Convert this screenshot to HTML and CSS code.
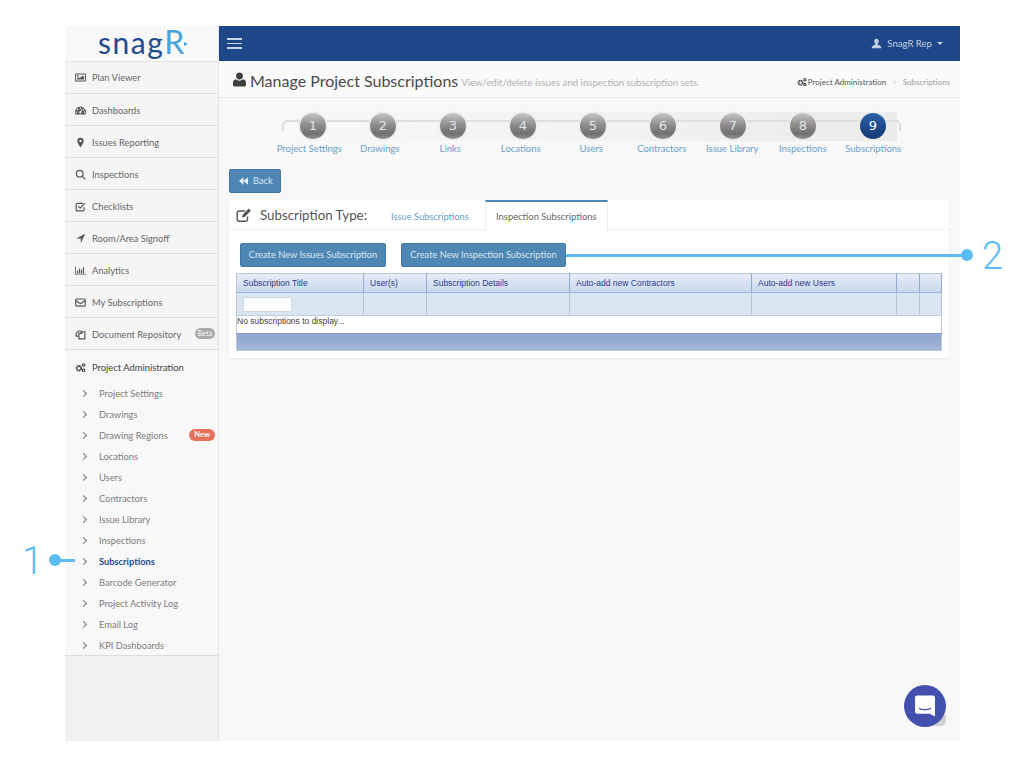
FILE: index.html
```html
<!DOCTYPE html>
<html lang="en">
<head>
    <meta charset="UTF-8">
    <meta name="viewport" content="width=device-width, initial-scale=1.0">
    <title>Manage Project Subscriptions</title>
    <link rel="stylesheet" href="styles.css">
</head>
<body>
    <div class="app">
        <aside class="sidebar">
            <div class="logo"><span class="logo-snag">snag</span><span class="logo-r">R</span><span class="logo-tip"></span></div>
            <ul class="nav">
                <li class="nav-item">
                    <svg class="ico" viewBox="0 0 14 14"><path fill-rule="evenodd" d="M1 2h12a1 1 0 0 1 1 1v8a1 1 0 0 1-1 1H1a1 1 0 0 1-1-1V3a1 1 0 0 1 1-1zm.2 1.2v7.6h11.6V3.2zM2.4 9.7V8.5l2.2-2.2 1.5 1.5 3.4-3.4 2.1 2.1v3.2zM2.4 5a1.1 1.1 0 1 1 2.2 0 1.1 1.1 0 0 1-2.2 0z"/></svg>
                    Plan Viewer
                </li>
                <li class="nav-item">
                    <svg class="ico" viewBox="0 0 14 14"><path fill-rule="evenodd" d="M7 2a7 7 0 0 1 7 7c0 1.2-.3 2.2-.8 3H.8C.3 11.200 0 10.200 0 9a7 7 0 0 1 7-7zM7 3.300a1 1 0 1 0 0 2 1 1 0 0 0 0-2zM3.400 4.900a1 1 0 1 0 0 2 1 1 0 0 0 0-2zM10.600 4.900a1 1 0 1 0 0 2 1 1 0 0 0 0-2zM2 8.300a1 1 0 1 0 0 2 1 1 0 0 0 0-2zM12 8.300a1 1 0 1 0 0 2 1 1 0 0 0 0-2zM9.200 5.600 6.500 8.100a1.400 1.400 0 1 0 1.500 1.100z"/></svg>
                    Dashboards
                </li>
                <li class="nav-item">
                    <svg class="ico" viewBox="0 0 14 14"><path fill-rule="evenodd" d="M7 1a4 4 0 0 1 4 4c0 1.800-2.700 6.600-4 8-1.300-1.400-4-6.200-4-8a4 4 0 0 1 4-4zm0 2.500a1.500 1.500 0 1 0 0 3 1.500 1.500 0 0 0 0-3z"/></svg>
                    Issues Reporting
                </li>
                <li class="nav-item">
                    <svg class="ico ico-line" viewBox="0 0 14 14"><circle cx="6" cy="6" r="4.200"/><path d="M9 9l4 4"/></svg>
                    Inspections
                </li>
                <li class="nav-item">
                    <svg class="ico ico-line" viewBox="0 0 14 14"><path d="M11.500 8v3a1.500 1.500 0 0 1-1.500 1.500H3A1.500 1.500 0 0 1 1.500 11V4.500A1.500 1.500 0 0 1 3 3h7"/><path d="M4 6.500 6.600 9l6-6.200"/></svg>
                    Checklists
                </li>
                <li class="nav-item">
                    <svg class="ico" viewBox="0 0 14 14"><path d="M13 1 7.300 13V7H1.500z"/></svg>
                    Room/Area Signoff
                </li>
                <li class="nav-item">
                    <svg class="ico" viewBox="0 0 14 14"><path d="M0 2h1v9h13v1H0zM2.500 7h1.500v3.500H2.500zM5 4.500h1.500v6H5zM7.500 6h1.500v4.500H7.500zM10 3h1.500v7.500H10z"/></svg>
                    Analytics
                </li>
                <li class="nav-item">
                    <svg class="ico ico-line" viewBox="0 0 14 14"><rect x="1" y="2.500" width="12" height="9" rx="1"/><path d="M1 4.500 7 8.500l6-4"/></svg>
                    My Subscriptions
                </li>
                <li class="nav-item">
                    <svg class="ico ico-line" viewBox="0 0 14 14"><path d="M1.500 5.500 4.500 2.500H8v3H5V9H1.500zM5 5.500h3L10 3.500h2.500V12.500H5z"/></svg>
                    Document Repository
                    <span class="badge badge-beta">Beta</span>
                </li>
                <li class="nav-group">
                    <div class="nav-group-title">
                        <svg class="ico" viewBox="0 0 14 14"><circle class="gear" cx="5" cy="8" r="2.900"/><circle class="gear-small" cx="11" cy="3.800" r="1.600"/><circle class="gear-small" cx="11" cy="10.500" r="1.600"/></svg>
                        Project Administration
                    </div>
                    <ul class="subnav">
                        <li class="subnav-item">Project Settings</li>
                        <li class="subnav-item">Drawings</li>
                        <li class="subnav-item">Drawing Regions <span class="badge badge-new">New</span></li>
                        <li class="subnav-item">Locations</li>
                        <li class="subnav-item">Users</li>
                        <li class="subnav-item">Contractors</li>
                        <li class="subnav-item">Issue Library</li>
                        <li class="subnav-item">Inspections</li>
                        <li class="subnav-item active">Subscriptions</li>
                        <li class="subnav-item">Barcode Generator</li>
                        <li class="subnav-item">Project Activity Log</li>
                        <li class="subnav-item">Email Log</li>
                        <li class="subnav-item">KPI Dashboards</li>
                    </ul>
                </li>
            </ul>
        </aside>

        <div class="main">
            <header class="topbar">
                <div class="burger"><span></span><span></span><span></span></div>
                <div class="user">
                    <svg class="user-ico" viewBox="0 0 14 14"><path d="M7 1c1.800 0 2.900 1.300 2.900 3.200 0 1.300-.6 2.600-1.400 3.300v1.100c1.500.6 4.500 1.200 4.500 2.900V13H1v-1.500c0-1.700 3-2.300 4.500-2.900V7.500C4.700 6.800 4.100 5.500 4.100 4.200 4.100 2.300 5.200 1 7 1z"/></svg>
                    SnagR Rep
                    <span class="caret"></span>
                </div>
            </header>

            <div class="page-head">
                <svg class="head-ico" viewBox="0 0 16 16"><path d="M8 0.500c2.200 0 3.700 1.600 3.700 3.700S10.200 8 8 8 4.300 6.300 4.300 4.200 5.800 0.500 8 0.500zM4.200 7.800C5.200 8.700 6.500 9.200 8 9.200s2.800-.5 3.800-1.400c2 .3 3.200 1.900 3.200 4.400v1.500c0 1-.7 1.800-1.800 1.800H2.800C1.700 15.500 1 14.700 1 13.700v-1.500c0-2.500 1.200-4.100 3.200-4.400z"/></svg>
                <h1 class="page-title">Manage Project Subscriptions</h1>
                <span class="page-sub">View/edit/delete issues and inspection subscription sets.</span>
                <div class="crumbs">
                    <svg class="crumb-ico" viewBox="0 0 14 14"><circle class="gear" cx="5" cy="8" r="2.900"/><circle class="gear-small" cx="11" cy="3.800" r="1.600"/><circle class="gear-small" cx="11" cy="10.500" r="1.600"/></svg>
                    <span class="crumb-link">Project Administration</span>
                    <span class="crumb-sep">&gt;</span>
                    <span class="crumb-current">Subscriptions</span>
                </div>
            </div>

            <div class="wizard">
                <div class="wizard-steps">
                    <span class="step">1</span>
                    <span class="step">2</span>
                    <span class="step">3</span>
                    <span class="step">4</span>
                    <span class="step">5</span>
                    <span class="step">6</span>
                    <span class="step">7</span>
                    <span class="step">8</span>
                    <span class="step current">9</span>
                </div>
                <div class="wizard-labels">
                    <span class="step-label">Project Settings</span>
                    <span class="step-label">Drawings</span>
                    <span class="step-label">Links</span>
                    <span class="step-label">Locations</span>
                    <span class="step-label">Users</span>
                    <span class="step-label">Contractors</span>
                    <span class="step-label">Issue Library</span>
                    <span class="step-label">Inspections</span>
                    <span class="step-label">Subscriptions</span>
                </div>
            </div>

            <div class="content">
                <button type="button" class="btn btn-back">
                    <svg class="back-ico" viewBox="0 0 12 10"><path d="M6 0v10L0 5zM12 0v10L6 5z"/></svg>
                    Back
                </button>

                <section class="card">
                    <div class="card-head">
                        <svg class="edit-ico" viewBox="0 0 16 16"><path class="edit-box" d="M11.500 9.500v3A1.800 1.800 0 0 1 9.700 14.300H3A1.800 1.800 0 0 1 1.200 12.500V5.800A1.800 1.800 0 0 1 3 4h6"/><path class="edit-pen" d="M6 10.500l.6-2.700L12.800 1.600l2.100 2.100L8.700 9.900z"/></svg>
                        <span class="card-title">Subscription Type:</span>
                        <span class="tab">Issue Subscriptions</span>
                        <span class="tab tab-active">Inspection Subscriptions</span>
                    </div>
                    <div class="card-body">
                        <div class="actions">
                            <button type="button" class="btn btn-issues">Create New Issues Subscription</button>
                            <button type="button" class="btn btn-inspection">Create New Inspection Subscription</button>
                        </div>
                        <table class="grid">
                            <colgroup>
                                <col class="col-title">
                                <col class="col-users">
                                <col class="col-details">
                                <col class="col-contractors">
                                <col class="col-addusers">
                                <col class="col-a">
                                <col class="col-b">
                            </colgroup>
                            <thead>
                                <tr class="grid-head">
                                    <th>Subscription Title</th>
                                    <th>User(s)</th>
                                    <th>Subscription Details</th>
                                    <th>Auto-add new Contractors</th>
                                    <th>Auto-add new Users</th>
                                    <th></th>
                                    <th></th>
                                </tr>
                                <tr class="grid-filter">
                                    <td><input type="text" class="grid-input"></td>
                                    <td></td>
                                    <td></td>
                                    <td></td>
                                    <td></td>
                                    <td></td>
                                    <td></td>
                                </tr>
                            </thead>
                            <tbody>
                                <tr class="grid-empty">
                                    <td colspan="7">No subscriptions to display...</td>
                                </tr>
                            </tbody>
                            <tfoot>
                                <tr class="grid-foot">
                                    <td colspan="7"></td>
                                </tr>
                            </tfoot>
                        </table>
                    </div>
                </section>
            </div>

            <div class="chat">
                <svg class="chat-ico" viewBox="1 1 18 19"><path d="M3 1h14a2 2 0 0 1 2 2v17l-4.500-2.500H3a2 2 0 0 1-2-2V3a2 2 0 0 1 2-2z"/><path class="chat-smile" d="M4.500 12.500c3 1.800 8 1.800 11 0"/></svg>
            </div>
            <div class="chat-tail"></div>
        </div>
    </div>

    <!-- callouts drawn over the screenshot -->
    <div class="callout callout-one">
        <span class="callout-num">1</span>
        <span class="callout-dot"></span>
        <span class="callout-line"></span>
    </div>
    <div class="callout callout-two">
        <span class="callout-line"></span>
        <span class="callout-dot"></span>
        <span class="callout-num">2</span>
    </div>
</body>
</html>
```

FILE: styles.css
```css
* {
    box-sizing: border-box;
}
html, body {
    height: 100%;
    overflow: hidden;
}
body {
    margin: 0;
    padding: 26px 0 0 65px;
    background-color: #ffffff;
    font-family: "Lato", "Noto Sans", sans-serif;
    position: relative;
}
.app {
    width: 895px;
    height: 715px;
    display: flex;
    background-color: #f8f8f8;
}

/* sidebar */
.sidebar {
    width: 154px;
    flex: none;
    background-color: #f1f1f1;
    border-right: 1px solid #e6e6e6;
}
.logo {
    height: 36px;
    background-color: #f8f8f8;
    display: flex;
    justify-content: center;
    align-items: baseline;
    font-size: 30px;
    line-height: 32px;
    letter-spacing: 1.500px;
    padding-left: 3px;
    border-bottom: 1px solid #e2e2e2;
}
.logo-snag {
    color: #1f4c8f;
}
.logo-r {
    color: #48a4d8;
    font-size: 32px;
}
.logo-tip {
    width: 0;
    height: 0;
    border-left: 4px solid #48a4d8;
    border-top: 2px solid transparent;
    border-bottom: 2px solid transparent;
    align-self: center;
    margin-left: -2px;
}
.nav, .subnav {
    list-style: none;
    margin: 0;
    padding: 0;
}
.nav-item {
    height: 32px;
    display: flex;
    align-items: center;
    padding: 1px 0 0 10px;
    font-size: 9.300px;
    color: #666666;
    background-color: #f5f5f5;
    border-bottom: 1px solid #dedede;
    white-space: nowrap;
}
.nav-item:first-child {
    padding-top: 0;
}
.ico {
    width: 11px;
    height: 11px;
    margin-right: 6px;
    fill: #555555;
    flex: none;
}
.ico-line {
    fill: none;
    stroke: #555555;
    stroke-width: 1.500;
}
.gear {
    fill: none;
    stroke: #444444;
    stroke-width: 2.400;
    stroke-dasharray: 2 0.500;
}
.gear-small {
    fill: none;
    stroke: #444444;
    stroke-width: 1.500;
}
.badge {
    margin-left: auto;
    border-radius: 7px;
    color: #ffffff;
    line-height: 12px;
    height: 12px;
}
.badge-beta {
    background-color: #aaaaaa;
    font-size: 7px;
    line-height: 11px;
    height: 11px;
    padding: 0 3px;
    margin-right: 3px;
    margin-top: -2px;
}
.badge-new {
    background-color: #e5705c;
    font-size: 7.500px;
    font-weight: 700;
    padding: 0 5px;
}
.nav-group {
    background-color: #f8f8f8;
    border-bottom: 1px solid #dedede;
}
.nav-group-title {
    height: 32px;
    display: flex;
    align-items: center;
    padding: 2px 0 0 10px;
    font-size: 9.400px;
    color: #444444;
}
.subnav-item {
    height: 21px;
    display: flex;
    align-items: center;
    padding: 1px 3px 0 34px;
    font-size: 9.300px;
    color: #7d7d7d;
    position: relative;
    white-space: nowrap;
}
.subnav-item::before {
    content: "";
    position: absolute;
    left: 16px;
    top: 9px;
    width: 4px;
    height: 4px;
    border-top: 1px solid #777777;
    border-right: 1px solid #777777;
    transform: rotate(45deg);
}
.subnav-item.active {
    color: #1f4c8f;
    font-weight: 700;
}

/* main column */
.main {
    flex: 1;
    min-width: 0;
    position: relative;
}
.topbar {
    height: 35px;
    background-color: #1d4789;
    display: flex;
    align-items: center;
    justify-content: space-between;
    padding: 0 17px 0 8px;
}
.burger {
    width: 15px;
    display: flex;
    flex-direction: column;
    gap: 3px;
}
.burger span {
    display: block;
    height: 1.500px;
    background-color: #c9d6ea;
}
.user {
    display: flex;
    align-items: center;
    color: #c3d0e4;
    font-size: 9.600px;
}
.user-ico {
    width: 11px;
    height: 11px;
    fill: #c3d0e4;
    margin-right: 5px;
}
.caret {
    width: 0;
    height: 0;
    margin-left: 5px;
    border-top: 3px solid #c3d0e4;
    border-left: 3px solid transparent;
    border-right: 3px solid transparent;
}
.page-head {
    height: 37px;
    display: flex;
    align-items: center;
    padding: 3px 10px 0 13px;
    background-color: #fafafa;
    border-bottom: 1px solid #e8e8e8;
}
.head-ico {
    width: 15px;
    height: 15px;
    fill: #3f3f3f;
    margin-right: 3px;
    margin-top: -2px;
}
.page-title {
    margin: 0;
    font-size: 16px;
    font-weight: 400;
    color: #4a4a4a;
    white-space: nowrap;
}
.page-sub {
    margin: 3px 0 0 3px;
    font-size: 9.600px;
    color: #b0b0b0;
    white-space: nowrap;
}
.crumbs {
    margin: 3px 0 0 auto;
    display: flex;
    align-items: center;
    font-size: 8px;
    color: #555555;
    white-space: nowrap;
}
.crumb-ico {
    width: 10px;
    height: 10px;
    margin-right: 1px;
}
.crumb-sep {
    margin: 0 6px;
    color: #c4c4c4;
}
.crumb-current {
    color: #999999;
}

/* wizard */
.wizard {
    height: 71px;
    padding-top: 15px;
    position: relative;
}
.wizard::before {
    content: "";
    position: absolute;
    left: 63px;
    width: 615px;
    top: 14px;
    height: 29px;
    background: linear-gradient(to right, #f8f8f8, #f3f3f3 50%, #ebebeb);
}
.wizard::after {
    content: "";
    position: absolute;
    left: 63px;
    width: 615px;
    top: 22px;
    height: 9px;
    border-top: 2px solid #dedede;
    border-left: 2px solid #dedede;
    border-right: 2px solid #dedede;
    border-radius: 5px 5px 0 0;
}
.wizard-steps {
    display: flex;
    padding-left: 81px;
    gap: 44px;
    position: relative;
    z-index: 1;
}
.step {
    width: 26px;
    height: 26px;
    flex: none;
    border-radius: 50%;
    background: linear-gradient(to bottom, #c8c8c8, #8e8e8e 45%, #707070 80%, #949494);
    box-shadow: 0 0 0 1.500px #ececec;
    color: #e4e4e4;
    font-family: "DejaVu Sans", sans-serif;
    font-size: 13px;
    line-height: 25px;
    text-align: center;
}
.step.current {
    background: linear-gradient(to bottom, #2a62a8, #1d4789 60%, #173a73);
    color: #ffffff;
}
.wizard-labels {
    display: flex;
    margin-top: 3px;
    padding-left: 55px;
}
.step-label {
    width: 70.500px;
    flex: none;
    text-align: center;
    font-size: 9.500px;
    line-height: 14px;
    color: #6aa0c8;
    white-space: nowrap;
}

/* content */
.content {
    padding: 0 11px 0 10px;
}
.btn {
    height: 24px;
    padding: 0 0 1px;
    border: 1px solid #44799f;
    border-radius: 2px;
    background-color: #4f87b4;
    color: #d8e6f0;
    font-family: inherit;
    font-size: 9.300px;
}
.btn-back {
    display: flex;
    align-items: center;
    padding-left: 9px;
    width: 52px;
}
.btn-issues {
    width: 146px;
}
.btn-inspection {
    width: 165px;
}
.back-ico {
    width: 9px;
    height: 8px;
    fill: #e6eef5;
    margin-right: 5px;
    flex: none;
}
.card {
    margin-top: 7px;
    height: 158px;
    background-color: #ffffff;
    box-shadow: 0 1px 2px rgba(0, 0, 0, 0.08);
}
.card-head {
    height: 30px;
    display: flex;
    align-items: center;
    padding-left: 7px;
    border-bottom: 1px solid #efefef;
}
.edit-ico {
    width: 16px;
    height: 16px;
    flex: none;
    margin-right: 8px;
}
.edit-box {
    fill: none;
    stroke: #555555;
    stroke-width: 1.400;
}
.edit-pen {
    fill: #555555;
}
.card-title {
    font-size: 13.300px;
    color: #555555;
    width: 120px;
    white-space: nowrap;
}
.tab {
    height: 30px;
    line-height: 33px;
    padding: 0 11px;
    font-size: 9.300px;
    color: #6aa0c8;
    white-space: nowrap;
}
.tab-active {
    width: 123px;
    margin-left: 5px;
    line-height: 30px;
    height: 31px;
    color: #666666;
    font-size: 9.400px;
    text-align: center;
    padding: 0;
    border-top: 2px solid #4f87b4;
    border-left: 1px solid #efefef;
    border-right: 1px solid #efefef;
    background-color: #ffffff;
    align-self: flex-start;
}
.card-body {
    padding: 13px 7px 0;
}
.actions {
    display: flex;
    gap: 15px;
    padding-left: 4px;
}
.grid {
    margin-top: 6px;
    width: 706px;
    height: 78px;
    table-layout: fixed;
    border-collapse: collapse;
    border: 1px solid #bcc8da;
    font-family: "Liberation Sans", sans-serif;
    font-size: 8.500px;
}
.col-title { width: 127px; }
.col-users { width: 63px; }
.col-details { width: 143px; }
.col-contractors { width: 182px; }
.col-addusers { width: 145px; }
.col-a { width: 23px; }
.grid-head {
    height: 19px;
    background: linear-gradient(to bottom, #e6edf7, #c7d7ec);
}
.grid-head th {
    font-weight: 400;
    color: #2c3a8a;
    text-align: left;
    padding: 0 0 0 6px;
    border-right: 1px solid #8fa8cf;
    border-bottom: 1px solid #9db4d8;
    white-space: nowrap;
}
.grid-filter {
    height: 23px;
    background-color: #dae5f2;
}
.grid-filter td {
    padding: 0 0 0 6px;
    border-right: 1px solid #b4c2d8;
    border-bottom: 1px solid #c0cde0;
}
.grid-input {
    display: block;
    width: 49px;
    height: 15px;
    padding: 0;
    border: 1px solid #d0d8e4;
    background-color: #ffffff;
}
.grid-empty {
    height: 18px;
}
.grid-empty td {
    padding: 0;
    vertical-align: top;
    color: #444444;
    line-height: 11px;
}
.grid-foot {
    height: 17px;
}
.grid-foot td {
    padding: 0;
    border-top: 1px solid #7f97c2;
    background: linear-gradient(to bottom, #8ea5cf, #a4b7d8);
}

/* chat launcher */
.chat {
    position: absolute;
    right: 14px;
    bottom: 14px;
    width: 42px;
    height: 42px;
    border-radius: 50%;
    background-color: #4350ae;
    display: flex;
    align-items: center;
    justify-content: center;
    z-index: 2;
}
.chat-ico {
    width: 20px;
    height: 22px;
    fill: #ffffff;
}
.chat-smile {
    fill: none;
    stroke: #4350ae;
    stroke-width: 1.100;
}
.chat-tail {
    position: absolute;
    right: 14px;
    bottom: 15px;
    width: 12px;
    height: 11px;
    background-color: #cfcfcf;
    border-radius: 50% 0 50% 0;
    z-index: 1;
}

/* numbered callouts */
.callout {
    position: absolute;
    display: flex;
    align-items: center;
    color: #5bbcf5;
}
.callout-one {
    left: 22px;
    top: 541px;
}
.callout-two {
    left: 566px;
    top: 236px;
}
.callout-num {
    font-family: "Roboto", sans-serif;
    font-weight: 300;
    font-size: 38px;
    line-height: 38px;
    position: relative;
    top: 1px;
}
.callout-dot {
    width: 12px;
    height: 12px;
    border-radius: 50%;
    background-color: #5bbcf5;
    flex: none;
}
.callout-line {
    height: 3px;
    background-color: #5bbcf5;
    flex: none;
}
.callout-one .callout-num {
    width: 27px;
}
.callout-one .callout-line {
    width: 15px;
    margin-left: -1px;
}
.callout-two .callout-line {
    width: 396px;
}
.callout-two .callout-dot {
    margin-left: -1px;
}
.callout-two .callout-num {
    margin-left: 9px;
}
```
